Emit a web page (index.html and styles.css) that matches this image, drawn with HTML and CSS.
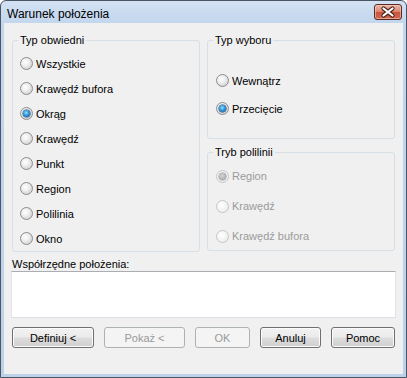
FILE: index.html
```html
<!DOCTYPE html>
<html lang="pl">
<head>
<meta charset="utf-8">
<title>Warunek położenia</title>
<link rel="stylesheet" href="styles.css">
</head>
<body>
<div class="window">
  <div class="titlebar">
    <span class="title">Warunek położenia</span>
    <span class="close">
      <svg width="26" height="14" viewBox="0 0 26 14">
        <path d="M8.5 3.5 L17.5 10.5 M17.5 3.5 L8.5 10.5" stroke="#4a2018" stroke-width="4.2" stroke-linecap="round" fill="none"/>
        <path d="M8.5 3.5 L17.5 10.5 M17.5 3.5 L8.5 10.5" stroke="#ffffff" stroke-width="2.2" stroke-linecap="round" fill="none"/>
      </svg>
    </span>
  </div>
  <div class="client">
    <div class="groups">
      <div class="group g1">
        <span class="legend">Typ obwiedni</span>
        <label class="radio"><span class="dot"></span>Wszystkie</label>
        <label class="radio"><span class="dot"></span>Krawędź bufora</label>
        <label class="radio"><span class="dot checked"></span>Okrąg</label>
        <label class="radio"><span class="dot"></span>Krawędź</label>
        <label class="radio"><span class="dot"></span>Punkt</label>
        <label class="radio"><span class="dot"></span>Region</label>
        <label class="radio"><span class="dot"></span>Polilinia</label>
        <label class="radio"><span class="dot"></span>Okno</label>
      </div>
      <div class="col">
        <div class="group g2">
          <span class="legend">Typ wyboru</span>
          <label class="radio"><span class="dot"></span>Wewnątrz</label>
          <label class="radio second"><span class="dot checked"></span>Przecięcie</label>
        </div>
        <div class="group g3">
          <span class="legend">Tryb polilinii</span>
          <label class="radio disabled"><span class="dot checked"></span>Region</label>
          <label class="radio disabled"><span class="dot"></span>Krawędź</label>
          <label class="radio disabled"><span class="dot"></span>Krawędź bufora</label>
        </div>
      </div>
    </div>
    <div class="coords-label">Współrzędne położenia:</div>
    <div class="textbox"></div>
    <div class="buttons">
      <span class="btn w-def">Definiuj &lt;</span>
      <span class="btn w-pok disabled">Pokaż &lt;</span>
      <span class="btn w-ok disabled">OK</span>
      <span class="btn w-anu">Anuluj</span>
      <span class="btn w-pom">Pomoc</span>
    </div>
  </div>
</div>
</body>
</html>
```
FILE: styles.css
```css
* { box-sizing: border-box; }
html, body { margin: 0; padding: 0; background: #ffffff; }
body {
  width: 407px;
  height: 378px;
  font-family: "Liberation Sans", Arial, sans-serif;
  font-size: 11px;
  color: #000000;
}
.window {
  width: 407px;
  height: 378px;
  border: 1px solid #4b5563;
  border-radius: 6px 6px 0 0;
  background: linear-gradient(#d3e2f3 0px, #c2d6ed 22px, #bcd2ea 100%);
  display: flex;
  flex-direction: column;
}
.titlebar {
  height: 22px;
  display: flex;
  align-items: flex-start;
  padding-left: 6px;
}
.title {
  font-size: 12px;
  line-height: 14px;
  margin-top: 6px;
  color: #000;
}
.close {
  margin-left: auto;
  margin-right: 4px;
  margin-top: 3px;
  width: 28px;
  height: 16px;
  border: 1px solid #5b2a22;
  border-radius: 3px;
  background: linear-gradient(#eab4a6 0%, #dc8c78 45%, #c9553d 52%, #cf6a52 100%);
  box-shadow: inset 0 0 0 1px rgba(255,220,210,0.5);
  display: flex;
  align-items: center;
  justify-content: center;
}
.close svg { display: block; }
.client {
  margin: 0 3px 3px 3px;
  flex: 1;
  background: #f0f0f0;
  padding: 17px 8px 0 8px;
  display: flex;
  flex-direction: column;
}
.groups {
  display: flex;
  gap: 7px;
}
.group {
  position: relative;
  border: 1px solid #d5dfe5;
  border-radius: 3px;
  width: 188px;
}
.legend {
  position: absolute;
  top: -7px;
  left: 5px;
  padding: 0 2px;
  line-height: 13px;
  background: #f0f0f0;
}
.g1 {
  height: 212px;
  padding: 10px 0 0 7px;
}
.col {
  display: flex;
  flex-direction: column;
}
.g2 {
  height: 99px;
  padding: 27px 0 0 8px;
}
.g3 {
  height: 99px;
  margin-top: 13px;
  padding: 8px 0 0 8px;
}
.radio {
  display: flex;
  align-items: center;
  gap: 3px;
  height: 25px;
  white-space: nowrap;
}
.g2 .second { margin-top: 3px; }
.g3 .radio { height: 30px; }
.dot {
  width: 13px;
  height: 13px;
  border-radius: 50%;
  border: 1px solid #8a8d90;
  background: radial-gradient(circle at 40% 38%, #ffffff 0%, #f0f0f0 35%, #d2d2d2 80%, #c4c4c4 100%);
  position: relative;
  flex: none;
}
.dot.checked::after {
  content: "";
  position: absolute;
  left: 2px;
  top: 2px;
  width: 7px;
  height: 7px;
  border-radius: 50%;
  background: radial-gradient(circle at 45% 40%, #9be3ff 0%, #3aa0e0 40%, #135fa6 80%, #0b3f78 100%);
  box-shadow: 0 0 0 0.5px #0e3d6e;
}
.radio.disabled { color: #9b9b9b; }
.radio.disabled .dot {
  border-color: #c4c6c8;
  background: radial-gradient(circle at 40% 38%, #ffffff 0%, #f6f6f6 40%, #e8e8e8 100%);
}
.radio.disabled .dot.checked::after {
  background: radial-gradient(circle at 45% 40%, #d8d8d8 0%, #b0b0b0 60%, #9a9a9a 100%);
  box-shadow: 0 0 0 0.5px #8f8f8f;
}
.coords-label {
  margin-top: 6px;
  line-height: 13px;
  white-space: nowrap;
}
.textbox {
  height: 47px;
  margin: 0 -1px;
  background: #ffffff;
  border: 1px solid #dbdfe6;
  border-top-color: #abadb3;
  border-left-color: #e2e3ea;
  border-right-color: #e2e3ea;
}
.buttons {
  margin-top: 9px;
  display: flex;
  justify-content: space-between;
}
.btn {
  height: 21px;
  border: 1px solid #707070;
  border-radius: 3px;
  background: linear-gradient(#f2f2f2 0%, #ebebeb 48%, #dddddd 52%, #cfcfcf 100%);
  box-shadow: inset 0 0 0 1px #fbfbfb;
  display: flex;
  align-items: center;
  justify-content: center;
  white-space: nowrap;
}
.btn.disabled {
  border-color: #adb2b5;
  background: #f4f4f4;
  box-shadow: none;
  color: #9a9a9a;
}
.w-def { width: 82px; }
.w-pok { width: 81px; }
.w-ok { width: 55px; }
.w-anu { width: 61px; }
.w-pom { width: 64px; }
```
